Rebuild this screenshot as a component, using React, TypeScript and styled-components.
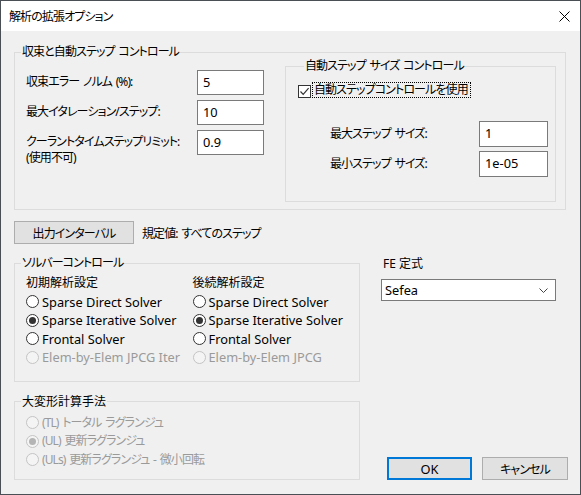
import styled, { createGlobalStyle } from "styled-components";

const GlobalStyle = createGlobalStyle`
  html, body {
    margin: 0;
    padding: 0;
    background: #f0f0f0;
  }
  * {
    box-sizing: border-box;
  }
`;

type Choice = { label: string; checked?: boolean; disabled?: boolean; latin?: boolean };

const initialSolvers: Choice[] = [
  { label: "Sparse Direct Solver", latin: true },
  { label: "Sparse Iterative Solver", checked: true, latin: true },
  { label: "Frontal Solver", latin: true },
  { label: "Elem-by-Elem JPCG Iter", disabled: true, latin: true },
];

const laterSolvers: Choice[] = [
  { label: "Sparse Direct Solver", latin: true },
  { label: "Sparse Iterative Solver", checked: true, latin: true },
  { label: "Frontal Solver", latin: true },
  { label: "Elem-by-Elem JPCG", disabled: true, latin: true },
];

const deformation: Choice[] = [
  { label: "(TL) トータル ラグランジュ", disabled: true },
  { label: "(UL) 更新ラグランジュ", checked: true, disabled: true },
  { label: "(ULs) 更新ラグランジュ - 微小回転", disabled: true },
];

function RadioRow({ label, checked, disabled, latin }: Choice) {
  return (
    <RadioLine $disabled={disabled} $latin={latin}>
      <RadioCircle $checked={checked} $disabled={disabled} />
      {label}
    </RadioLine>
  );
}

function App() {
  return (
    <>
      <GlobalStyle />
      <Window>
        <TitleBar>
          <span>解析の拡張オプション</span>
          <svg width="11" height="11" viewBox="0 0 11 11" aria-hidden="true">
            <path d="M0.5 0.5 L10.5 10.5 M10.5 0.5 L0.5 10.5" stroke="#000" strokeWidth="1" />
          </svg>
        </TitleBar>

        <Content>
          <Group>
            <Legend>収束と自動ステップ コントロール</Legend>
            <ConvergenceBody>
              <FieldGrid>
                <FieldLabel>収束エラー ノルム (%):</FieldLabel>
                <TextBox>5</TextBox>
                <FieldLabel>最大イタレーション/ステップ:</FieldLabel>
                <TextBox>10</TextBox>
                <FieldLabel>
                  クーラントタイムステップリミット:
                  <br />
                  (使用不可)
                </FieldLabel>
                <TextBox>0.9</TextBox>
              </FieldGrid>

              <InnerGroup>
                <Legend>自動ステップ サイズ コントロール</Legend>
                <CheckRow>
                  <CheckBox>
                    <svg width="11" height="11" viewBox="0 0 11 11" aria-hidden="true">
                      <path d="M1.5 5.5 L4.2 8.3 L9.6 2.2" fill="none" stroke="#333" strokeWidth="1.2" />
                    </svg>
                  </CheckBox>
                  <FocusLabel>自動ステップコントロールを使用</FocusLabel>
                </CheckRow>
                <SizeGrid>
                  <FieldLabel $center>最大ステップ サイズ:</FieldLabel>
                  <TextBox $tall>1</TextBox>
                  <FieldLabel $center>最小ステップ サイズ:</FieldLabel>
                  <TextBox $tall>1e-05</TextBox>
                </SizeGrid>
              </InnerGroup>
            </ConvergenceBody>
          </Group>

          <IntervalRow>
            <PushButton $width={120}>出力インターバル</PushButton>
            <span>規定値: すべてのステップ</span>
          </IntervalRow>

          <BottomArea>
            <LeftColumn>
              <Group>
                <Legend>ソルバーコントロール</Legend>
                <SolverBody>
                  <SolverColumn>
                    <ColumnHead>初期解析設定</ColumnHead>
                    {initialSolvers.map((c) => (
                      <RadioRow key={c.label} {...c} />
                    ))}
                  </SolverColumn>
                  <SolverColumn>
                    <ColumnHead>後続解析設定</ColumnHead>
                    {laterSolvers.map((c) => (
                      <RadioRow key={c.label} {...c} />
                    ))}
                  </SolverColumn>
                </SolverBody>
              </Group>

              <Group>
                <Legend $kanji>大変形計算手法</Legend>
                <DeformBody>
                  {deformation.map((c) => (
                    <RadioRow key={c.label} {...c} />
                  ))}
                </DeformBody>
              </Group>
            </LeftColumn>

            <RightColumn>
              <FeLabel>FE 定式</FeLabel>
              <Select>
                Sefea
                <svg width="9" height="5" viewBox="0 0 9 5" aria-hidden="true">
                  <path d="M0.5 0.5 L4.5 4.5 L8.5 0.5" fill="none" stroke="#444" strokeWidth="1" />
                </svg>
              </Select>
              <DialogButtons>
                <PushButton $width={85} $primary $latin>
                  OK
                </PushButton>
                <PushButton $width={86}>キャンセル</PushButton>
              </DialogButtons>
            </RightColumn>
          </BottomArea>
        </Content>
      </Window>
    </>
  );
}

const Window = styled.div`
  width: 581px;
  height: 495px;
  border: 1px solid #4a4f56;
  background: #f0f0f0;
  display: flex;
  flex-direction: column;
  font-family: "Noto Sans", "Noto Sans CJK JP", sans-serif;
  font-feature-settings: "palt";
  font-size: 12px;
  letter-spacing: -0.9px;
  word-spacing: 1.5px;
  color: #000;
  overflow: hidden;
`;

const TitleBar = styled.div`
  height: 30px;
  flex: none;
  background: #fff;
  display: flex;
  align-items: center;
  justify-content: space-between;
  padding: 0 10px 0 8px;
`;

const Content = styled.div`
  flex: 1;
  display: flex;
  flex-direction: column;
  padding: 14px 14px 0 13px;
`;

const Group = styled.fieldset`
  margin: 0;
  padding: 0;
  min-width: 0;
  border: 1px solid #dcdcdc;
`;

const Legend = styled.legend<{ $kanji?: boolean }>`
  margin-left: 6px;
  padding: 0 1px;
  line-height: 14px;
  letter-spacing: ${({ $kanji }) => ($kanji ? "0" : "-0.9px")};
`;

const ConvergenceBody = styled.div`
  display: flex;
  align-items: flex-start;
  padding: 0 9px 7px 11px;
`;

const FieldGrid = styled.div`
  display: grid;
  grid-template-columns: 171px 67px;
  row-gap: 5px;
  margin-top: 11px;
`;

const FieldLabel = styled.div<{ $center?: boolean }>`
  line-height: 16px;
  align-self: ${({ $center }) => ($center ? "center" : "start")};
  padding-top: ${({ $center }) => ($center ? "0" : "4px")};
  white-space: nowrap;
`;

const TextBox = styled.div<{ $tall?: boolean }>`
  height: ${({ $tall }) => ($tall ? "26px" : "25px")};
  border: 1px solid #7a7a7a;
  background: #fff;
  padding: 3px 5px 0;
  line-height: 16px;
  font-size: 12.8px;
  letter-spacing: 0;
`;

const InnerGroup = styled(Group)`
  flex: 1;
  margin-left: 21px;
  padding: 0 0 24px 12px;
`;

const CheckRow = styled.div`
  display: flex;
  align-items: center;
  gap: 1px;
  margin-top: 9px;
`;

const CheckBox = styled.span`
  width: 13px;
  height: 13px;
  border: 1px solid #333;
  background: #fff;
  display: flex;
  align-items: center;
  justify-content: center;
  margin-top: 2px;
`;

const FocusLabel = styled.span`
  border: 1px dotted #000;
  padding: 0 2px 0 1px;
  line-height: 14px;
`;

const SizeGrid = styled.div`
  display: grid;
  grid-template-columns: 149px 69px;
  row-gap: 4px;
  margin: 23px 0 0 32px;
`;

const IntervalRow = styled.div`
  display: flex;
  align-items: center;
  gap: 8px;
  margin-top: 11px;
`;

const PushButton = styled.div<{ $width: number; $primary?: boolean; $latin?: boolean }>`
  width: ${({ $width }) => $width}px;
  height: 23px;
  display: flex;
  align-items: center;
  justify-content: center;
  background: #e1e1e1;
  border: ${({ $primary }) => ($primary ? "2px solid #0078d7" : "1px solid #adadad")};
  font-size: ${({ $latin }) => ($latin ? "12.8px" : "12px")};
  letter-spacing: ${({ $latin }) => ($latin ? "0" : "-0.9px")};
`;

const BottomArea = styled.div`
  display: flex;
  margin-top: 12px;
`;

const LeftColumn = styled.div`
  width: 346px;
  display: flex;
  flex-direction: column;
  gap: 13px;
`;

const SolverBody = styled.div`
  display: flex;
  padding: 4px 0 14px 11px;
`;

const SolverColumn = styled.div`
  width: 174px;
  display: flex;
  flex-direction: column;
`;

const ColumnHead = styled.div`
  line-height: 18.5px;
  letter-spacing: 0;
`;

const RadioLine = styled.div<{ $disabled?: boolean; $latin?: boolean }>`
  display: flex;
  align-items: center;
  gap: 3px;
  line-height: 18.5px;
  white-space: nowrap;
  font-size: ${({ $latin }) => ($latin ? "12.8px" : "12px")};
  letter-spacing: ${({ $latin }) => ($latin ? "0" : "-0.9px")};
  word-spacing: ${({ $latin }) => ($latin ? "0" : "1.5px")};
  color: ${({ $disabled }) => ($disabled ? "#9a9a9a" : "#000")};
`;

const RadioCircle = styled.span<{ $checked?: boolean; $disabled?: boolean }>`
  flex: none;
  width: 13px;
  height: 13px;
  border-radius: 50%;
  border: 1px solid ${({ $disabled }) => ($disabled ? "#c4c4c4" : "#333")};
  background: ${({ $disabled }) => ($disabled ? "#f4f4f4" : "#fff")};
  display: flex;
  align-items: center;
  justify-content: center;

  &::after {
    content: "";
    display: ${({ $checked }) => ($checked ? "block" : "none")};
    width: 7px;
    height: 7px;
    border-radius: 50%;
    background: ${({ $disabled }) => ($disabled ? "#b4b4b4" : "#333")};
  }
`;

const DeformBody = styled.div`
  display: flex;
  flex-direction: column;
  padding: 5px 0 10px 11px;
`;

const RightColumn = styled.div`
  flex: 1;
  display: flex;
  flex-direction: column;
  margin: 0 -2px 0 21px;
`;

const FeLabel = styled.div`
  line-height: 14px;
  padding: 1px 0 0 2px;
  letter-spacing: 0;
  word-spacing: 0;
`;

const Select = styled.div`
  width: 175px;
  height: 22px;
  margin-top: 8px;
  border: 1px solid #7a7a7a;
  background: #fff;
  display: flex;
  align-items: center;
  justify-content: space-between;
  padding: 0 7px 0 3px;
  font-size: 12.8px;
  letter-spacing: 0;
`;

const DialogButtons = styled.div`
  margin-top: auto;
  display: flex;
  justify-content: flex-end;
  gap: 10px;
`;

export default App;
